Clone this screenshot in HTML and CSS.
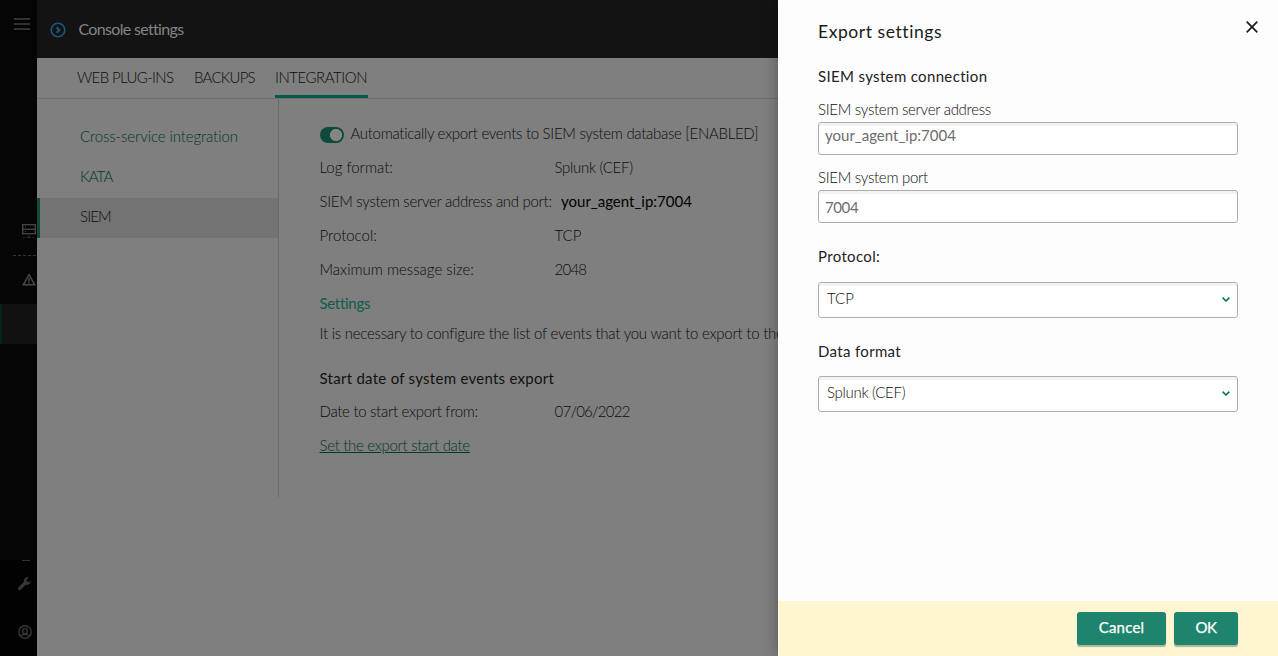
FILE: index.html
```html
<!DOCTYPE html>
<html lang="en">
<head>
<meta charset="utf-8">
<title>Console settings</title>
<link rel="stylesheet" href="styles.css">
</head>
<body>
<div class="app">
  <nav class="rail">
    <svg class="rail-icons" width="37" height="656" viewBox="0 0 37 656">
      <rect y="560" width="37" height="96" fill="#020202"/>
      <rect y="304" width="37" height="40" fill="#111"/>
      <rect y="304" width="2" height="40" fill="#06251c"/>
      <g fill="#303030"><rect x="14" y="18" width="16" height="2"/><rect x="14" y="23" width="16" height="2"/><rect x="14" y="28" width="16" height="2"/></g>
      <g fill="none" stroke="#434343"><rect x="22.7" y="224.7" width="12.6" height="9" stroke-width="1.4"/><path d="M23 229.3h12" stroke-width="1.4"/><path d="M25 227h1M25 231.5h1" /><path d="M23 237.4h12" stroke="#2a2a2a" stroke-dasharray="2 1"/><path d="M29 236v2"/></g>
      <path d="M13 255.5h24" stroke="#333" stroke-dasharray="3 2"/>
      <path d="M29 274.7l5.7 10.1H23.3z" fill="none" stroke="#484848" stroke-width="1.5"/><path d="M29 278v3.5M29 282.3v1.3" stroke="#484848" stroke-width="1.5"/>
      <rect x="22" y="560" width="8" height="1" fill="#303030"/>
      <path d="M18.4 587.2l5.4-5.2a4.1 4.1 0 0 1 4.9-4.8l-2.1 2.5.5 2.1 2.1.4 1.7-2.1a4.1 4.1 0 0 1-5 4.7l-5.3 5q-1.3.9-2.2 0t0-2.6z" fill="#363636"/>
      <g fill="none" stroke="#363636" stroke-width="1.4"><circle cx="25" cy="632" r="6.2"/><rect x="22.7" y="628.4" width="4.6" height="5.4" rx="2.2"/><path d="M20.3 636q2.2-1.4 3.5-1.6h2.4q1.3.2 3.5 1.6"/></g>
    </svg>
  </nav>
  <main class="main">
    <header class="header">
      <svg width="16" height="16" viewBox="0 0 16 16" fill="none" stroke="#1c5980"><circle cx="8" cy="8" r="6.8" stroke-width="1.6"/><path d="M6.6 5.2L9.4 8l-2.8 2.8" stroke-width="2"/></svg>
      <h1 class="title">Console settings</h1>
    </header>
    <div class="tabs"><span class="tab plugins">WEB PLUG-INS</span><span class="tab backups">BACKUPS</span><span class="tab active">INTEGRATION</span></div>
    <div class="body">
      <aside class="side">
        <a class="side-link">Cross-service integration</a>
        <a class="side-link caps">KATA</a>
        <a class="side-link caps current">SIEM</a>
      </aside>
      <section class="content">
        <div class="row"><span class="toggle"></span><span class="tight">Automatically export events to SIEM system database [ENABLED]</span></div>
        <div class="row"><span class="label">Log format:</span><span class="tight">Splunk (CEF)</span></div>
        <div class="row"><span class="label tight">SIEM system server address and port:</span><span class="address">your_agent_ip:7004</span></div>
        <div class="row"><span class="label">Protocol:</span><span>TCP</span></div>
        <div class="row"><span class="label">Maximum message size:</span><span class="digits">2048</span></div>
        <div class="row"><a class="settings tight">Settings</a></div>
        <p class="note">It is necessary to configure the list of events that you want to export to the</p>
        <h2 class="subhead">Start date of system events export</h2>
        <div class="row"><span class="label tight">Date to start export from:</span><span class="digits">07/06/2022</span></div>
        <div class="row"><a class="date-link tight">Set the export start date</a></div>
      </section>
    </div>
  </main>
  <aside class="drawer">
    <div class="form">
      <div class="drawer-head"><h2 class="drawer-title">Export settings</h2>
      <svg class="close" width="12" height="12" viewBox="0 0 12 12"><path d="M.7.7l10.6 10.6M11.3.7L.7 11.3" stroke="#1a1a1a" stroke-width="1.7"/></svg></div>
      <h3 class="group g1">SIEM system connection</h3>
      <label class="flabel">SIEM system server address</label>
      <div class="input addr">your_agent_ip:7004</div>
      <label class="flabel second">SIEM system port</label>
      <div class="input port">7004</div>
      <h3 class="group g2">Protocol:</h3>
      <div class="select"><span>TCP</span><svg width="8" height="5" viewBox="0 0 8 5" fill="none"><path d="M.6.6L4 4 7.4.6" stroke="#00705c" stroke-width="1.5"/></svg></div>
      <h3 class="group g3">Data format</h3>
      <div class="select"><span class="tight">Splunk (CEF)</span><svg width="8" height="5" viewBox="0 0 8 5" fill="none"><path d="M.6.6L4 4 7.4.6" stroke="#00705c" stroke-width="1.5"/></svg></div>
    </div>
    <footer class="footer"><button class="btn cancel">Cancel</button><button class="btn ok">OK</button></footer>
  </aside>
</div>
</body>
</html>
```
FILE: styles.css
```css
* { box-sizing: border-box; }
body { margin: 0; width: 1278px; height: 656px; overflow: hidden; font-family: Lato, sans-serif; font-size: 15px; font-weight: 300; color: #0c0c0c; }
h1, h2, h3, p { margin: 0; font: inherit; }
.tight { letter-spacing: -.3px; }
.caps { letter-spacing: -.85px; }
.digits { letter-spacing: -.75px; }
.app { display: flex; height: 656px; background: #7f7f7f; }
.rail { flex: 0 0 37px; background: #050505; }
.rail-icons { display: block; }
.main { flex: 0 0 741px; overflow: hidden; display: flex; flex-direction: column; white-space: nowrap; }
.header { flex: 0 0 58px; display: flex; align-items: center; gap: 14px; padding-left: 12px; background: #131313; }
.header svg { margin-right: -.5px; position: relative; left: .5px; top: .5px; }
.title { padding-bottom: 2px; font-weight: 400; font-size: 16px; letter-spacing: -.67px; color: #858585; }
.tabs { flex: 0 0 41px; display: flex; gap: 20px; padding-left: 40px; border-bottom: 1px solid #6f6f6f; line-height: 38px; }
.tab { height: 40px; }
.plugins { width: 97px; letter-spacing: -.63px; }
.backups { width: 61px; letter-spacing: -.77px; }
.active { width: 93px; letter-spacing: -.46px; border-bottom: 3px solid #005b4b; }
.body { display: flex; }
.side { flex: 0 0 242px; height: 398px; padding-top: 19px; border-right: 1px solid #6a6a6a; }
.side-link { display: block; height: 40px; line-height: 37px; padding-left: 43px; color: #00382a; }
.side-link:first-child { letter-spacing: -.1px; }
.current { padding-left: 40px; border-left: 3px solid #0f4a3b; background: #737373; color: #0c0c0c; }
.content { padding: 17px 0 0 40.5px; }
.row { display: flex; align-items: center; height: 34px; }
.label { flex: 0 0 235px; }
.toggle { width: 24px; height: 16px; margin: 4px 7px 0 0; border-radius: 8px; background: radial-gradient(circle at 16px 8px, #858585 5.8px, #0e4a3b 6.3px); }
.address { padding: 0 0 1px 6.5px; font-weight: 400; color: #000; }
.settings { color: #0e5c4c; font-weight: 400; }
.note { line-height: 26px; letter-spacing: -.24px; }
.subhead { padding: 19px 0 3px; line-height: 26px; letter-spacing: .27px; font-weight: 400; color: #111; }
.date-link { color: #00382a; text-decoration: underline; }
.drawer { flex: 0 0 500px; position: relative; display: flex; flex-direction: column; background: #fdfdfd; box-shadow: 0 0 14px rgba(0,0,0,.35); }
.form { flex: 1; padding: 0 40px; }
.drawer-head { display: flex; justify-content: space-between; height: 63px; padding-top: 21px; margin-right: -20px; }
.drawer-title { font-size: 17.5px; line-height: 22px; letter-spacing: .56px; font-weight: 400; color: #1a1a1a; }
.group { font-weight: 400; line-height: 26px; letter-spacing: .34px; color: #222; }
.g1 { margin-bottom: 8px; }
.g2 { margin: 20px 0 13px; }
.g3 { margin: 20px 0 12px; }
.flabel { display: block; line-height: 25px; letter-spacing: -.29px; }
.second { margin-top: 10px; }
.input, .select { border: 1px solid #adadad; border-radius: 3px; background: #fff; box-shadow: inset 0 3px 0 #f3f3f3; }
.input { height: 33px; padding-left: 6px; font-weight: 400; color: #6c6c6c; line-height: 25px; }
.port { line-height: 32px; letter-spacing: -.4px; }
.select { display: flex; align-items: center; justify-content: space-between; height: 36px; padding: 0 7px 2px 8px; }
.select span { padding-bottom: 2px; }
.footer { height: 55px; display: flex; justify-content: flex-end; gap: 8px; padding: 11px 40px 0; background: #fff5d0; }
.btn { height: 33px; padding: 0 0 3px; border: 0; border-radius: 3px; background: #1f846d; color: #fff; font: 400 15px Lato, sans-serif; -webkit-text-stroke: .25px #fff; box-shadow: 0 2px 1px rgba(70,100,80,.45); }
.cancel { width: 89px; letter-spacing: .2px; }
.ok { width: 64px; letter-spacing: -.4px; }
```
